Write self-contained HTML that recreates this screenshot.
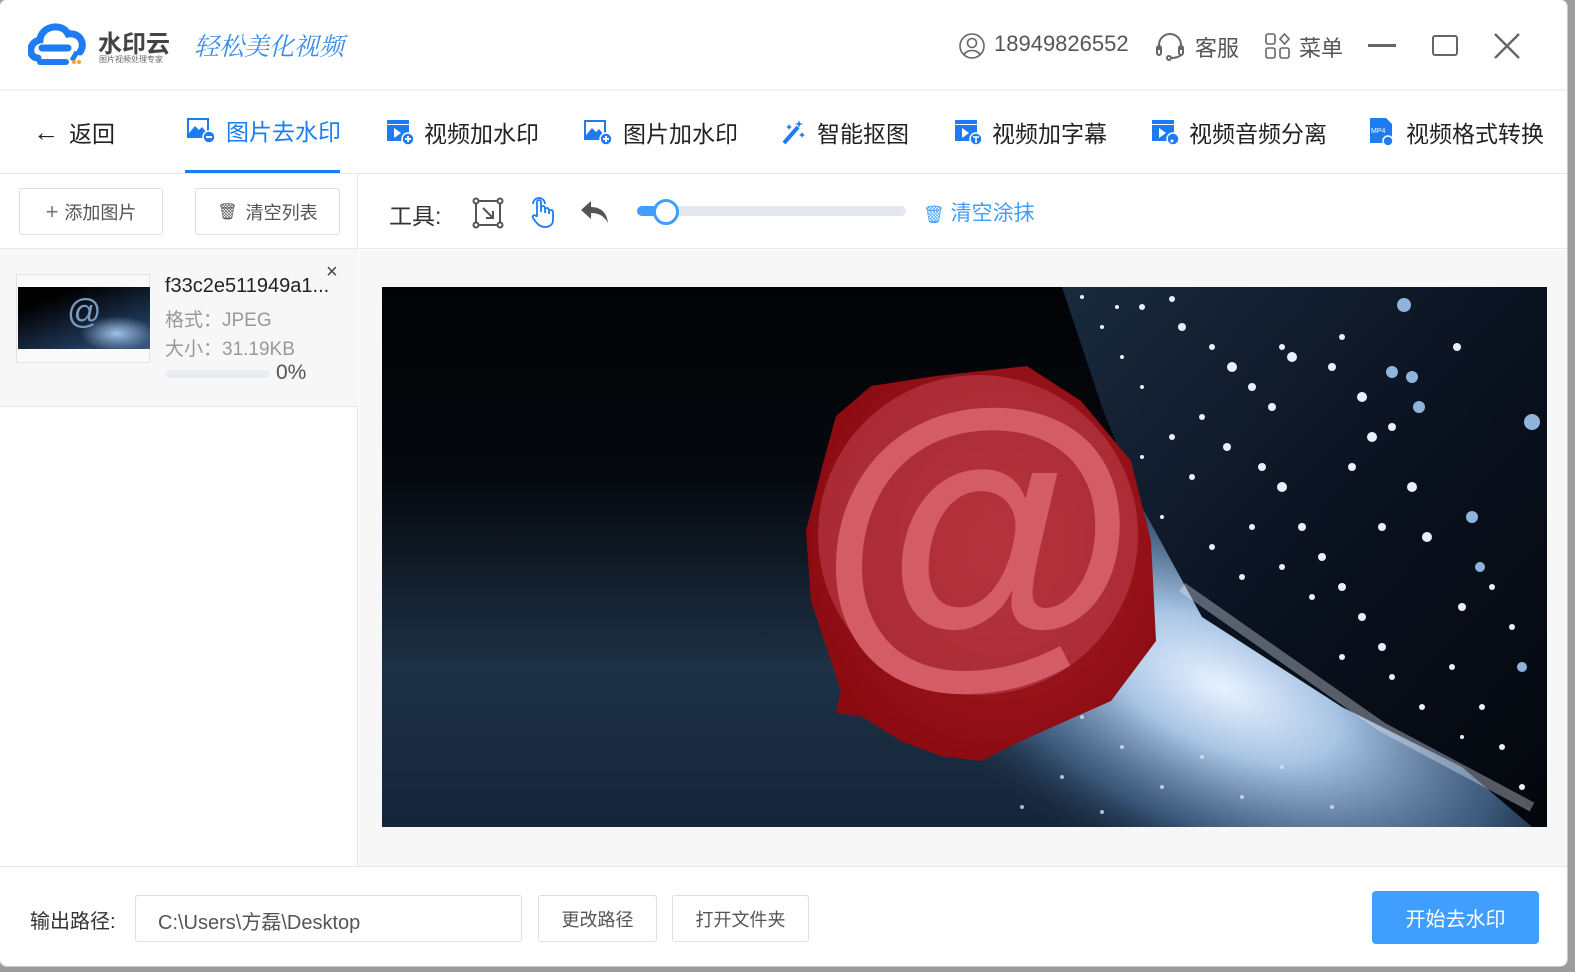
<!DOCTYPE html>
<html><head><meta charset="utf-8">
<style>
*{box-sizing:border-box;margin:0;padding:0}
html,body{width:1575px;height:972px;overflow:hidden}
body{background:#9c9c9c;font-family:"Liberation Sans","Noto Sans CJK SC",sans-serif;position:relative}
.win{position:absolute;left:-1px;top:-1px;width:1569px;height:968px;background:#fff;border:1px solid #c8c8c8;border-radius:8px;overflow:hidden}
.abs{position:absolute}
.t{position:absolute;white-space:nowrap}
.btn{position:absolute;border:1px solid #dcdfe6;border-radius:3px;background:#fff;color:#555;font-size:18px;display:flex;align-items:center;justify-content:center}
.nav{position:absolute;top:114px;font-size:23px;color:#222;display:flex;align-items:center;white-space:nowrap}
.nav svg{margin-right:10px}
</style></head><body>
<div class="win">
<svg class="abs" style="left:28px;top:18px" width="70" height="50" viewBox="0 0 70 50">
<path d="M10 40 C0 40 0 24 12 22 C13 8 34 4 40 16 C52 14 58 26 52 34" fill="none" stroke="#1e7cf2" stroke-width="7" stroke-linecap="round"/>
<path d="M14 30 H40" stroke="#1e7cf2" stroke-width="7" stroke-linecap="round"/>
<path d="M12 44 H38" stroke="#1e7cf2" stroke-width="6" stroke-linecap="round"/>
<rect x="44" y="33" width="5" height="10" fill="#1e7cf2" transform="rotate(30 46 38)"/>
<circle cx="46" cy="44" r="2" fill="#f5a623"/><circle cx="51" cy="44" r="2" fill="#f5a623"/>
</svg>
<div class="t" style="left:98px;top:24px;font-size:24px;font-weight:bold;color:#444">水印云</div>
<div class="t" style="left:99px;top:54px;font-size:8px;color:#666">图片视频处理专家</div>
<div class="t" style="left:194px;top:27px;font-size:25px;color:#3a8be8;font-family:'Liberation Serif','Noto Serif CJK SC',serif;font-style:italic">轻松美化视频</div>

<svg class="abs" style="left:958px;top:32px" width="28" height="28" viewBox="0 0 28 28" fill="none" stroke="#666" stroke-width="1.6"><circle cx="14" cy="14" r="12"/><circle cx="14" cy="11" r="4.5"/><path d="M6 23 C8 17 20 17 22 23"/></svg>
<div class="t" style="left:994px;top:31px;font-size:22px;color:#555">18949826552</div>
<svg class="abs" style="left:1154px;top:30px" width="32" height="32" viewBox="0 0 32 32" fill="none" stroke="#666" stroke-width="2"><path d="M5 20 V15 A11 11 0 0 1 27 15 V20"/><rect x="3" y="16" width="4" height="9" rx="2"/><rect x="25" y="16" width="4" height="9" rx="2"/><path d="M27 25 Q24 28 17 28"/><circle cx="15" cy="28" r="2"/></svg>
<div class="t" style="left:1195px;top:31px;font-size:22px;color:#555">客服</div>
<svg class="abs" style="left:1264px;top:32px" width="28" height="28" viewBox="0 0 28 28" fill="none" stroke="#666" stroke-width="1.6"><rect x="2" y="2" width="9" height="10" rx="2"/><rect x="2" y="16" width="9" height="10" rx="2"/><rect x="16" y="16" width="9" height="10" rx="2"/><path d="M20.5 2 L25 7 L20.5 12 L16 7 Z"/></svg>
<div class="t" style="left:1299px;top:31px;font-size:22px;color:#555">菜单</div>
<div class="abs" style="left:1368px;top:44px;width:28px;height:3px;background:#666"></div>
<div class="abs" style="left:1432px;top:35px;width:26px;height:21px;border:2px solid #666;border-radius:3px"></div>
<svg class="abs" style="left:1493px;top:32px" width="28" height="28" viewBox="0 0 28 28" stroke="#666" stroke-width="2.4"><path d="M2 2 L26 26 M26 2 L2 26"/></svg>

<div class="abs" style="left:0;top:89px;width:1569px;height:2px;background:#f2f2f2"></div>

<div class="nav" style="left:33px;top:115px"><span style="font-size:26px;margin-right:10px">←</span>返回</div>
<div class="nav" style="left:186px;color:#1e7cf2;top:113px"><svg width="30" height="28" viewBox="0 0 30 28"><rect x="1" y="2" width="22" height="20" fill="#1e7cf2"/><rect x="3" y="4" width="18" height="13" fill="#fff"/><path d="M3 17 L9 10 L13 14 L16 11 L21 17Z" fill="#1e7cf2"/><circle cx="23" cy="21" r="6" fill="#1e7cf2" stroke="#fff" stroke-width="1.5"/><path d="M20 21 H26" stroke="#fff" stroke-width="2"/></svg>图片去水印</div>
<div class="abs" style="left:185px;top:170px;width:155px;height:4px;background:#1e7cf2"></div>
<div class="nav" style="left:386px;top:115px"><svg width="28" height="28" viewBox="0 0 28 28"><rect x="1" y="2" width="22" height="4" fill="#1e7cf2"/><rect x="1" y="7" width="22" height="16" fill="#1e7cf2"/><path d="M8 10 L15 15 L8 20Z" fill="#fff"/><circle cx="22" cy="21" r="6" fill="#1e7cf2" stroke="#fff" stroke-width="1.5"/><path d="M19 21 H25 M22 18 V24" stroke="#fff" stroke-width="2"/></svg>视频加水印</div>
<div class="nav" style="left:583px;top:115px"><svg width="30" height="28" viewBox="0 0 30 28"><rect x="1" y="2" width="22" height="20" fill="#1e7cf2"/><rect x="3" y="4" width="18" height="13" fill="#fff"/><path d="M3 17 L9 10 L13 14 L16 11 L21 17Z" fill="#1e7cf2"/><circle cx="23" cy="21" r="6" fill="#1e7cf2" stroke="#fff" stroke-width="1.5"/><path d="M20 21 H26 M23 18 V24" stroke="#fff" stroke-width="2"/></svg>图片加水印</div>
<div class="nav" style="left:781px;top:115px"><svg width="26" height="28" viewBox="0 0 26 28"><path d="M3 25 L17 9" stroke="#1e7cf2" stroke-width="4"/><path d="M18 2 L19 5 L22 6 L19 7 L18 10 L17 7 L14 6 L17 5Z M8 6 L9 8 L11 9 L9 10 L8 12 L7 10 L5 9 L7 8Z M21 14 L22 16 L24 17 L22 18 L21 20 L20 18 L18 17 L20 16Z" fill="#1e7cf2"/></svg>智能抠图</div>
<div class="nav" style="left:954px;top:115px"><svg width="28" height="28" viewBox="0 0 28 28"><rect x="1" y="2" width="22" height="4" fill="#1e7cf2"/><rect x="1" y="7" width="22" height="16" fill="#1e7cf2"/><path d="M8 10 L15 15 L8 20Z" fill="#fff"/><circle cx="22" cy="21" r="6" fill="#1e7cf2" stroke="#fff" stroke-width="1.5"/><path d="M19 19 H25 M22 19 V25" stroke="#fff" stroke-width="1.6"/></svg>视频加字幕</div>
<div class="nav" style="left:1151px;top:115px"><svg width="28" height="28" viewBox="0 0 28 28"><rect x="1" y="2" width="22" height="4" fill="#1e7cf2"/><rect x="1" y="7" width="22" height="16" fill="#1e7cf2"/><path d="M8 10 L15 15 L8 20Z" fill="#fff"/><circle cx="22" cy="21" r="6" fill="#1e7cf2" stroke="#fff" stroke-width="1.5"/><circle cx="21" cy="23" r="1.5" fill="#fff"/></svg>视频音频分离</div>
<div class="nav" style="left:1368px;top:115px"><svg width="28" height="30" viewBox="0 0 28 30"><path d="M2 1 H18 L24 7 V26 H2Z" fill="#1e7cf2"/><text x="3" y="16" font-size="7" fill="#fff" font-family="Liberation Sans">MP4</text><circle cx="20" cy="24" r="5" fill="#1e7cf2" stroke="#fff" stroke-width="1.5"/></svg>视频格式转换</div>

<div class="abs" style="left:0;top:173px;width:1569px;height:1px;background:#e6e6e6"></div>

<div class="abs" style="left:0;top:174px;width:358px;height:692px;background:#fff;border-right:1px solid #e6e6e6"></div>
<div class="btn" style="left:19px;top:188px;width:144px;height:47px"><span style="font-size:22px;margin-right:6px;color:#777">+</span>添加图片</div>
<div class="btn" style="left:195px;top:188px;width:145px;height:47px"><span style="margin-right:8px;font-size:16px">🗑</span>清空列表</div>
<div class="abs" style="left:0;top:248px;width:358px;height:1px;background:#e6e6e6"></div>
<div class="abs" style="left:0;top:249px;width:358px;height:158px;background:#f7f7f7;border-bottom:1px solid #e6e6e6"></div>
<div class="abs" style="left:16px;top:274px;width:134px;height:89px;border:1px solid #e2e2e2;background:#fafafa"></div>
<div class="abs" style="left:18px;top:287px;width:132px;height:62px;background:radial-gradient(ellipse 40% 40% at 75% 75%,#9ec2e8,rgba(0,0,0,0) 70%),linear-gradient(160deg,#000 20%,#1c3350 70%,#3a5a80)"></div>
<div class="t" style="left:67px;top:293px;font-size:34px;color:#7a9ac0">@</div>
<div class="t" style="left:165px;top:275px;font-size:20px;color:#222">f33c2e511949a1...</div>
<div class="t" style="left:326px;top:261px;font-size:20px;color:#444">×</div>
<div class="t" style="left:165px;top:305px;font-size:19px;color:#999">格式：JPEG</div>
<div class="t" style="left:165px;top:334px;font-size:19px;color:#999">大小：31.19KB</div>
<div class="abs" style="left:166px;top:370px;width:104px;height:8px;border-radius:4px;background:#e8ecf3"></div>
<div class="t" style="left:276px;top:361px;font-size:21px;color:#555">0%</div>

<div class="abs" style="left:359px;top:174px;width:1210px;height:75px;background:#fff;border-bottom:1px solid #e6e6e6"></div>
<div class="t" style="left:389px;top:197px;font-size:23px;color:#333">工具:</div>
<svg class="abs" style="left:472px;top:197px" width="32" height="32" viewBox="0 0 32 32" fill="none" stroke="#555" stroke-width="2"><rect x="4" y="4" width="24" height="24"/><circle cx="4" cy="4" r="2.5" fill="#fff"/><circle cx="28" cy="4" r="2.5" fill="#fff"/><circle cx="4" cy="28" r="2.5" fill="#fff"/><circle cx="28" cy="28" r="2.5" fill="#fff"/><path d="M11 11 L21 21 M21 14 V21 H14"/></svg>
<svg class="abs" style="left:527px;top:196px" width="30" height="34" viewBox="0 0 30 34" fill="none" stroke="#1e7cf2" stroke-width="1.8"><path d="M10 20 V6 a2 2 0 0 1 4 0 V16 V12 a2 2 0 0 1 4 0 V17 V14 a2 2 0 0 1 4 0 V18 V16 a2 2 0 0 1 4 0 V24 C26 29 22 31 18 31 C13 31 10 28 6 22 C5 20 7 18 9 20Z"/><path d="M6 8 A6 6 0 0 1 18 8"/></svg>
<svg class="abs" style="left:579px;top:199px" width="32" height="26" viewBox="0 0 32 26"><path d="M12 2 L2 11 L12 20 V14 C20 14 25 17 29 24 C28 14 22 8 12 8Z" fill="#555"/></svg>
<div class="abs" style="left:637px;top:206px;width:269px;height:10px;border-radius:5px;background:#e4e7ed"></div>
<div class="abs" style="left:637px;top:206px;width:30px;height:10px;border-radius:5px;background:#409eff"></div>
<div class="abs" style="left:653px;top:199px;width:26px;height:26px;border-radius:50%;background:#fff;border:3px solid #409eff"></div>
<div class="t" style="left:923px;top:197px;font-size:21px;color:#409eff"><span style="font-size:17px;margin-right:6px">🗑</span>清空涂抹</div>

<div class="abs" style="left:359px;top:250px;width:1210px;height:616px;background:#f7f7f7"></div>
<svg class="abs" style="left:382px;top:287px" width="1165" height="540" viewBox="0 0 1165 540">
<defs>
<linearGradient id="bg" x1="0" y1="0" x2="0" y2="1"><stop offset="0" stop-color="#020305"/><stop offset=".35" stop-color="#05080e"/><stop offset=".7" stop-color="#1d3045"/><stop offset="1" stop-color="#16263a"/></linearGradient>
<radialGradient id="glow" cx="0.5" cy="0.5" r="0.5"><stop offset="0" stop-color="#e8f2ff"/><stop offset=".3" stop-color="#a8c4e4"/><stop offset=".7" stop-color="#4a6c94" stop-opacity=".7"/><stop offset="1" stop-color="#1d3045" stop-opacity="0"/></radialGradient>
<linearGradient id="fib" x1="0" y1="0" x2="1" y2="1"><stop offset="0" stop-color="#1a2a3e"/><stop offset=".5" stop-color="#0a1220"/><stop offset="1" stop-color="#04070c"/></linearGradient>
<radialGradient id="red" cx="0.55" cy="0.45" r="0.6"><stop offset="0" stop-color="#a82028"/><stop offset="1" stop-color="#8a0a10"/></radialGradient>
</defs>
<rect width="1165" height="540" fill="url(#bg)"/>
<ellipse cx="840" cy="400" rx="420" ry="200" fill="url(#glow)" transform="rotate(25 840 400)"/>
<polygon points="680,0 1165,0 1165,540 1150,540 1080,480 960,420 820,330 760,220 720,120" fill="url(#fib)"/>
<path d="M800 300 L1000 440 L1150 520" stroke="#eaf4ff" stroke-width="10" opacity=".35" fill="none"/>
<g fill="#e8f0ff">
<circle cx="700" cy="10" r="2"/><circle cx="720" cy="40" r="2"/><circle cx="740" cy="70" r="2"/><circle cx="760" cy="100" r="2"/><circle cx="735" cy="20" r="2"/><circle cx="760" cy="20" r="3"/><circle cx="790" cy="12" r="3"/><circle cx="800" cy="40" r="4"/><circle cx="830" cy="60" r="3"/><circle cx="850" cy="80" r="5"/><circle cx="870" cy="100" r="4"/><circle cx="890" cy="120" r="4"/><circle cx="820" cy="130" r="3"/><circle cx="845" cy="160" r="4"/><circle cx="880" cy="180" r="4"/><circle cx="900" cy="200" r="5"/><circle cx="920" cy="240" r="4"/><circle cx="870" cy="240" r="3"/><circle cx="940" cy="270" r="4"/><circle cx="960" cy="300" r="4"/><circle cx="980" cy="330" r="4"/><circle cx="1000" cy="360" r="4"/><circle cx="930" cy="310" r="3"/><circle cx="900" cy="60" r="3"/><circle cx="910" cy="70" r="5"/><circle cx="950" cy="80" r="4"/><circle cx="980" cy="110" r="5"/><circle cx="990" cy="150" r="5"/><circle cx="970" cy="180" r="4"/><circle cx="1010" cy="140" r="4"/><circle cx="1030" cy="200" r="5"/><circle cx="1000" cy="240" r="4"/><circle cx="1045" cy="250" r="5"/><circle cx="1080" cy="320" r="4"/><circle cx="1110" cy="300" r="3"/><circle cx="1130" cy="340" r="3"/><circle cx="1070" cy="380" r="3"/><circle cx="1100" cy="420" r="3"/><circle cx="1120" cy="460" r="3"/><circle cx="1140" cy="500" r="3"/><circle cx="1080" cy="450" r="2"/><circle cx="1010" cy="390" r="3"/><circle cx="960" cy="370" r="3"/><circle cx="1040" cy="420" r="3"/><circle cx="1075" cy="60" r="4"/><circle cx="960" cy="50" r="3"/><circle cx="790" cy="150" r="3"/><circle cx="810" cy="190" r="3"/><circle cx="760" cy="170" r="2"/><circle cx="780" cy="230" r="2"/><circle cx="830" cy="260" r="3"/><circle cx="860" cy="290" r="3"/><circle cx="900" cy="280" r="3"/>
</g>
<g fill="#8fb4dc"><circle cx="1022" cy="18" r="7"/><circle cx="1010" cy="85" r="6"/><circle cx="1030" cy="90" r="6"/><circle cx="1037" cy="120" r="6"/><circle cx="1150" cy="135" r="8"/><circle cx="1090" cy="230" r="6"/><circle cx="1098" cy="280" r="5"/><circle cx="1140" cy="380" r="5"/></g>
<g fill="#d0e2f5" opacity=".8"><circle cx="700" cy="430" r="2"/><circle cx="740" cy="460" r="2"/><circle cx="780" cy="500" r="2"/><circle cx="820" cy="470" r="2"/><circle cx="860" cy="510" r="2"/><circle cx="900" cy="480" r="2"/><circle cx="950" cy="520" r="2"/><circle cx="680" cy="490" r="2"/><circle cx="640" cy="520" r="2"/><circle cx="720" cy="525" r="2"/></g>
<polygon points="454,129 489,99 554,89 645,79 699,114 749,174 769,254 774,354 759,374 729,414 639,454 599,474 559,469 519,454 479,429 454,426 459,404 429,314 424,244 439,184" fill="url(#red)"/>
<circle cx="596" cy="248" r="160" fill="#c04450" opacity=".55"/>
<text x="596" y="355" text-anchor="middle" font-size="330" font-weight="bold" fill="#d45c66" font-family="Liberation Sans">@</text>
</svg>

<div class="abs" style="left:0;top:866px;width:1569px;height:1px;background:#e6e6e6"></div>
<div class="t" style="left:30px;top:905px;font-size:20px;color:#333">输出路径:</div>
<div class="abs" style="left:135px;top:895px;width:387px;height:47px;border:1px solid #dcdfe6;border-radius:3px"></div>
<div class="t" style="left:158px;top:906px;font-size:20px;color:#555">C:\Users\方磊\Desktop</div>
<div class="btn" style="left:538px;top:895px;width:119px;height:47px">更改路径</div>
<div class="btn" style="left:672px;top:895px;width:137px;height:47px">打开文件夹</div>
<div class="abs" style="left:1372px;top:891px;width:167px;height:53px;border-radius:4px;background:#409eff;color:#fff;font-size:20px;display:flex;align-items:center;justify-content:center">开始去水印</div>
</div>
</body></html>
